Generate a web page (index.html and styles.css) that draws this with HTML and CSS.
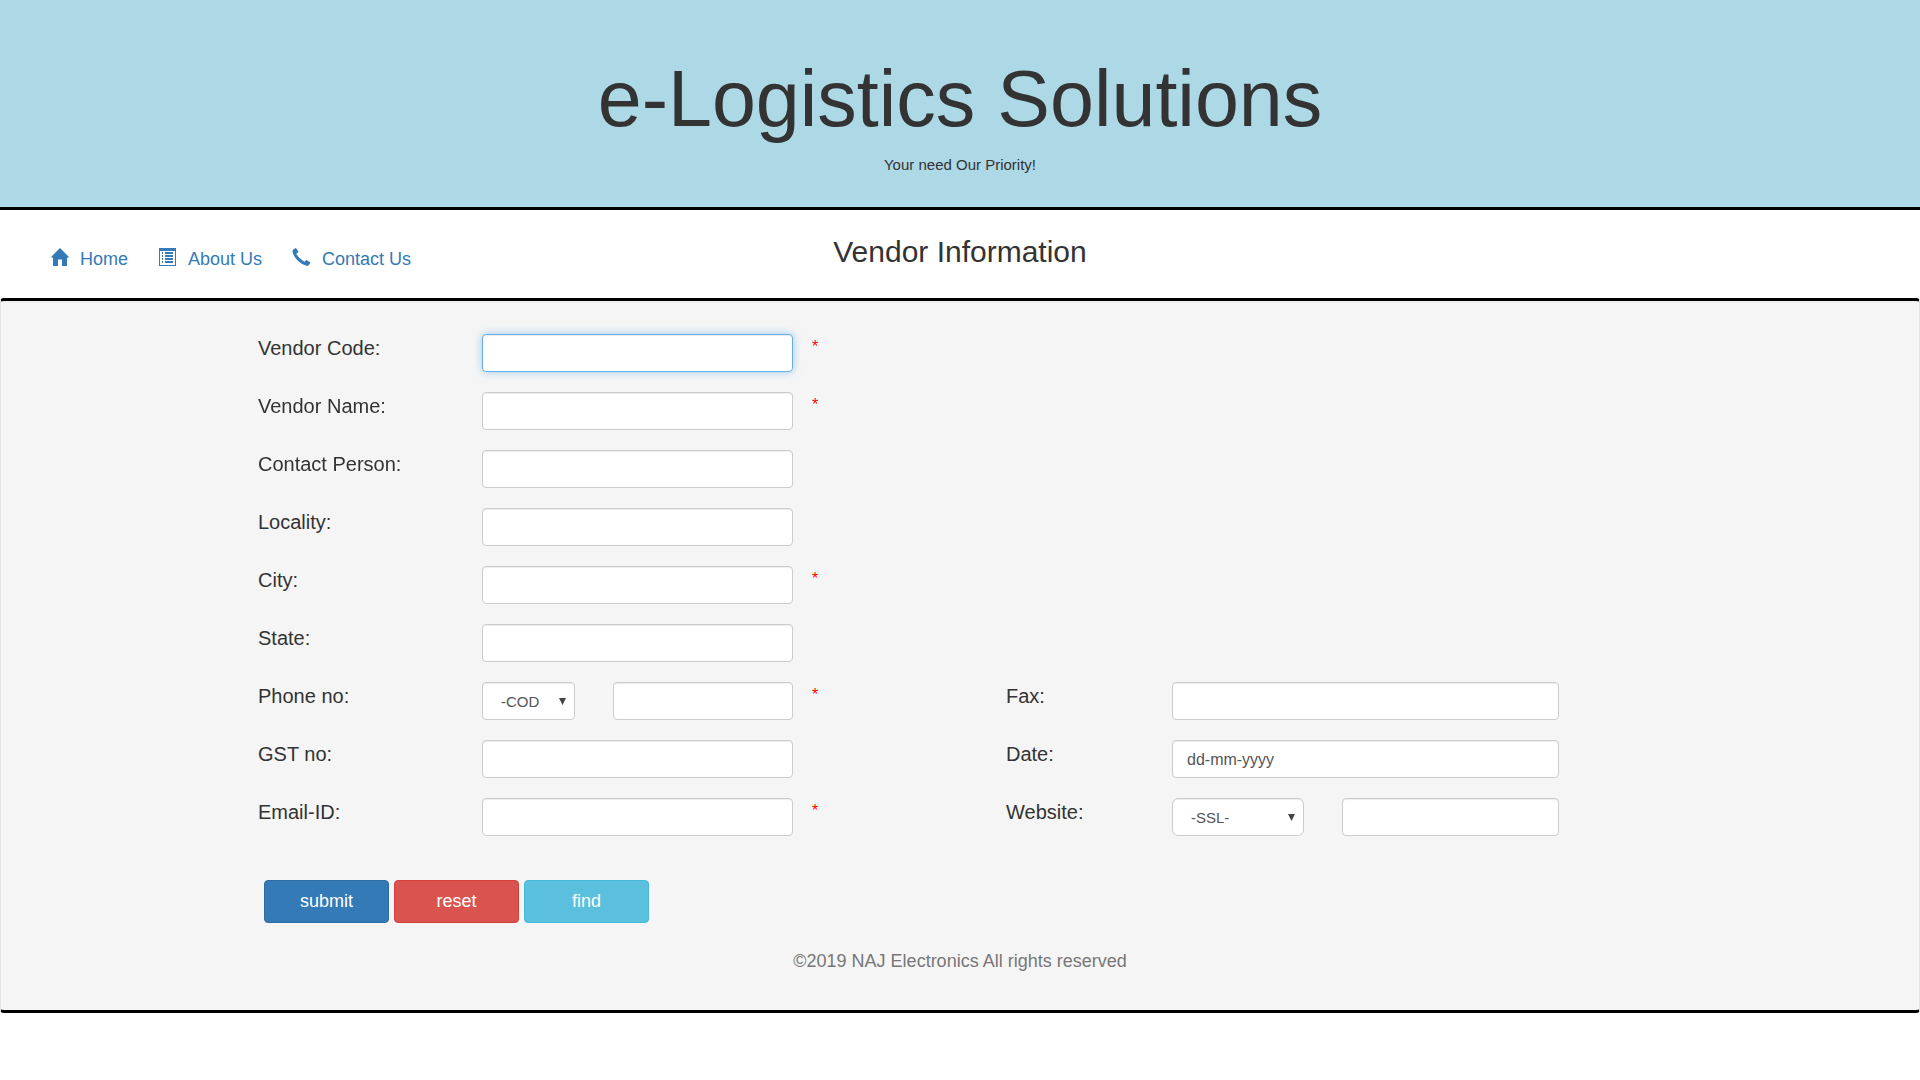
FILE: index.html
```html
<!DOCTYPE html>
<html lang="en">
<head>
  <meta charset="utf-8">
  <meta name="viewport" content="width=device-width, initial-scale=1">
  <title>Vendor Information</title>
  <link rel="stylesheet" href="styles.css">
</head>
<body>
  <header class="banner">
    <h1 class="banner-title">e-Logistics Solutions</h1>
    <p class="banner-tagline">Your need Our Priority!</p>
  </header>

  <div class="topbar">
    <nav class="nav">
      <a class="nav-link" href="#home">
        <svg class="nav-icon" viewBox="0 0 20 18" aria-hidden="true"><path d="M10 0 19.500 9.500H17V18H12V11.500H8V18H3V9.500H.5Z"/></svg>
        Home
      </a>
      <a class="nav-link" href="#about">
        <svg class="nav-icon" viewBox="0 0 20 18" aria-hidden="true"><path fill-rule="evenodd" d="M1 0H18V18H1ZM2 3V17H17V3ZM4 4H5V6H4ZM4 7H5V9H4ZM4 10H5V12H4ZM4 13H5V15H4ZM7 4H15V6H7ZM7 7H15V9H7ZM7 10H15V12H7ZM7 13H15V15H7Z"/></svg>
        About Us
      </a>
      <a class="nav-link" href="#contact">
        <svg class="nav-icon" viewBox="0 0 20 18" aria-hidden="true"><path d="M1 1.800 3.300 .2Q4 -.1 4.500 .7L6.200 3.300Q6.600 4.100 5.900 4.600L4.200 5.800Q5.500 8 7.800 10.200Q10.200 12.400 12.700 13.800L13.600 12.500Q14.100 11.800 14.900 12.300L17.800 14Q18.600 14.500 18.100 15.200L16.600 17.300Q16 18.100 14.500 17.800Q9.600 16.400 5.300 12.200Q1.300 8 .5 3.600Q.4 2.400 1 1.800Z"/></svg>
        Contact Us
      </a>
    </nav>
    <h2 class="page-title">Vendor Information</h2>
  </div>

  <main class="panel">
    <form>
      <div class="row">
        <label class="label" for="code">Vendor Code:</label>
        <input class="control" id="code" type="text" autofocus>
        <span class="required">*</span>
      </div>
      <div class="row">
        <label class="label" for="name">Vendor Name:</label>
        <input class="control" id="name" type="text">
        <span class="required">*</span>
      </div>
      <div class="row">
        <label class="label" for="person">Contact Person:</label>
        <input class="control" id="person" type="text">
      </div>
      <div class="row">
        <label class="label" for="locality">Locality:</label>
        <input class="control" id="locality" type="text">
      </div>
      <div class="row">
        <label class="label" for="city">City:</label>
        <input class="control" id="city" type="text">
        <span class="required">*</span>
      </div>
      <div class="row">
        <label class="label" for="state">State:</label>
        <input class="control" id="state" type="text">
      </div>
      <div class="row">
        <label class="label" for="phone">Phone no:</label>
        <div class="pair pair-phone">
          <select class="control select" aria-label="Phone code"><option>-COD</option></select>
          <input class="control" id="phone" type="tel">
        </div>
        <span class="required">*</span>
        <label class="label label-right" for="fax">Fax:</label>
        <input class="control" id="fax" type="text">
      </div>
      <div class="row">
        <label class="label" for="gst">GST no:</label>
        <input class="control" id="gst" type="text">
        <label class="label label-right" for="date">Date:</label>
        <input class="control control-date" id="date" type="text" placeholder="dd-mm-yyyy">
      </div>
      <div class="row">
        <label class="label" for="email">Email-ID:</label>
        <input class="control" id="email" type="email">
        <span class="required">*</span>
        <label class="label label-right" for="website">Website:</label>
        <div class="pair pair-website">
          <select class="control select select-round" aria-label="Website protocol"><option>-SSL-</option></select>
          <input class="control" id="website" type="text">
        </div>
      </div>
      <div class="row">
        <div class="actions">
          <button class="button button-submit" type="submit">submit</button>
          <button class="button button-reset" type="reset">reset</button>
          <button class="button button-find" type="button">find</button>
        </div>
      </div>
    </form>
    <footer class="copyright">©2019 NAJ Electronics All rights reserved</footer>
  </main>
</body>
</html>
```
FILE: styles.css
```css
* {
  box-sizing: border-box;
}

body {
  margin: 0;
  background: #fff;
  color: #333;
  font: 15px/21px "Liberation Sans", Arial, Helvetica, sans-serif;
}

.banner {
  padding: 55px 16px 32px;
  border-bottom: 3px solid #000;
  background: #add8e6;
  text-align: center;
}

.banner-title {
  margin: 0 0 11px;
  font-size: 79px;
  font-weight: 400;
  line-height: 88px;
}

.banner-tagline {
  margin: 0;
}

.topbar {
  display: grid;
  grid-template-columns: 1fr auto 1fr;
  padding: 24px 50px 26px;
}

.nav {
  display: flex;
  gap: 30px;
  padding-top: 12px;
}

.nav-link {
  display: flex;
  gap: 10px;
  color: #337ab7;
  font-size: 18px;
  line-height: 26px;
  text-decoration: none;
}

.nav-icon {
  width: 20px;
  height: 18px;
  margin-top: 2px;
  fill: currentColor;
}

.page-title {
  margin: 0;
  font-size: 30px;
  font-weight: 400;
  line-height: 36px;
}

.panel {
  padding: 33px 0 37px;
  border: 1px solid #e3e3e3;
  border-top: 3px solid #000;
  border-bottom: 3px solid #000;
  border-radius: 4px;
  background: #f5f5f5;
  box-shadow: inset 0 1px 1px rgba(0, 0, 0, 0.05);
}

.row {
  display: grid;
  grid-template-columns: 257fr 224fr 311fr 213fr 166fr 387fr 360fr;
  margin-bottom: 20px;
}

.label {
  grid-column: 2;
  font-size: 20px;
  line-height: 28px;
}

.label-right {
  grid-column: 5;
}

.control {
  width: 100%;
  min-width: 0;
  height: 38px;
  padding: 6px 14px;
  border: 1px solid #ccc;
  border-radius: 4px;
  outline: 0;
  background: #fff;
  box-shadow: inset 0 1px 1px rgba(0, 0, 0, 0.075);
  color: #555;
  font: inherit;
}

.control:focus {
  border-color: #66afe9;
  box-shadow: inset 0 1px 1px rgba(0, 0, 0, 0.075), 0 0 8px rgba(102, 175, 233, 0.6);
}

.control::placeholder {
  color: #555;
  opacity: 1;
}

.control-date {
  padding: 8px 14px 6px;
  font-size: 16px;
}

.select {
  padding: 6px 18px;
  appearance: none;
  background: #fff url("data:image/svg+xml,%3Csvg xmlns='http://www.w3.org/2000/svg' width='7' height='7'%3E%3Cpath fill='%23444' d='M0 0h7L3.5 7z'/%3E%3C/svg%3E") no-repeat right 8px center;
}

.select-round {
  border-radius: 6px;
}

.required {
  padding-left: 19px;
  color: #f00;
  font-size: 16px;
  line-height: 26px;
}

.pair {
  display: grid;
}

.pair-phone {
  grid-template-columns: 93fr 38fr 180fr;
}

.pair-website {
  grid-template-columns: 132fr 38fr 217fr;
}

.pair > :last-child {
  grid-column: 3;
}

.actions {
  display: flex;
  grid-column: 2 / 5;
  gap: 5px;
  padding: 24px 6px 0;
}

.button {
  width: 125px;
  height: 43px;
  padding: 0 0 2px;
  border: 1px solid;
  border-radius: 4px;
  color: #fff;
  font: 18px/24px "Liberation Sans", Arial, Helvetica, sans-serif;
}

.button-submit {
  border-color: #2e6da4;
  background: #337ab7;
}

.button-reset {
  border-color: #d43f3a;
  background: #d9534f;
}

.button-find {
  border-color: #46b8da;
  background: #5bc0de;
}

.copyright {
  padding-top: 6px;
  color: #777;
  font-size: 18px;
  line-height: 24px;
  text-align: center;
}
```
